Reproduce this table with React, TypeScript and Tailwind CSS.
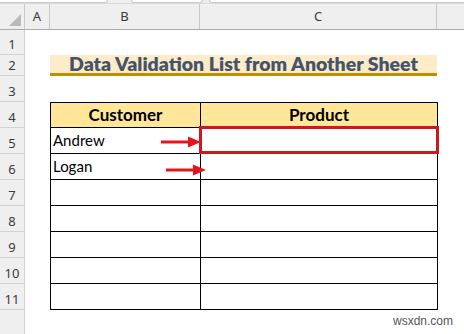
import React from "react";

const HEAD = "font-['Noto_Sans',sans-serif] text-[13px] text-[#3a3a3a]";

function RowHead({ n }: { n?: number }) {
  return (
    <div className={`w-[25px] shrink-0 bg-[#efefef] border-r border-b border-[#d2d2d2] flex items-end justify-center pb-[2px] leading-[16px] ${HEAD}`}>
      {n}
    </div>
  );
}

function Arrow({ className }: { className: string }) {
  return (
    <svg className={`absolute z-10 ${className}`} width="40" height="12" viewBox="0 0 40 12">
      <path d="M0 6 H30" stroke="#e0161d" strokeWidth="3" />
      <path d="M27 0.5 L40 6 L27 11.5 Z" fill="#e0161d" />
    </svg>
  );
}

export default function App() {
  const body = "font-['Lato',sans-serif] text-black";
  const tableRows = [7, 8, 9, 10, 11];

  return (
    <div className="relative w-[464px] h-[334px] bg-white overflow-hidden flex flex-col">
      {/* formula bar bottom edges */}
      <div className="h-[4px] shrink-0 bg-[#efefef] flex border-b border-[#dadada]">
        <div className="w-[108px] h-[3px] bg-white border-b border-r border-[#c8c8c8] rounded-br-[5px]" />
        <div className="w-[72px] ml-[23px] h-[3px] bg-white border-b border-x border-[#c8c8c8] rounded-b-[5px]" />
        <div className="flex-1 ml-[6px] h-[3px] bg-white border-b border-l border-[#c8c8c8] rounded-bl-[5px]" />
      </div>

      {/* column headers */}
      <div className={`h-[26px] shrink-0 flex bg-[#efefef] border-b border-[#ababab] ${HEAD}`}>
        <div className="w-[25px] border-r border-[#c8c8c8] flex items-end justify-end pr-[3px] pb-[3px]">
          <svg width="12" height="12" viewBox="0 0 12 12">
            <path d="M12 0 V12 H0 Z" fill="#b9b9b9" />
          </svg>
        </div>
        <div className="w-[25px] border-r border-[#c8c8c8] flex items-center justify-center">A</div>
        <div className="w-[150px] border-r border-[#c8c8c8] flex items-center justify-center">B</div>
        <div className="w-[237px] border-r border-[#c8c8c8] flex items-center justify-center">C</div>
        <div className="flex-1" />
      </div>

      {/* row 1 */}
      <div className="h-[25px] shrink-0 flex">
        <RowHead n={1} />
      </div>

      {/* row 2 title */}
      <div className="h-[21px] shrink-0 flex">
        <RowHead n={2} />
        <div className="w-[25px]" />
        <div className="w-[387px] bg-[#fdebc9] border-b-[3px] border-[#bf8f00] flex items-center justify-center pb-[1px] font-['Lato',sans-serif] font-extrabold text-[19.5px] leading-none text-[#44546a]">
          Data Validation List from Another Sheet
        </div>
      </div>

      {/* row 3 */}
      <div className="h-[26px] shrink-0 flex">
        <RowHead n={3} />
      </div>

      {/* row 4 header */}
      <div className={`h-[26px] shrink-0 flex ${body}`}>
        <RowHead n={4} />
        <div className="w-[25px]" />
        <div className="w-[151px] bg-[#ffe699] border border-black flex items-center justify-center font-bold text-[17px]">
          Customer
        </div>
        <div className="w-[237px] bg-[#ffe699] border-y border-r border-black flex items-center justify-center font-bold text-[17px]">
          Product
        </div>
      </div>

      {/* row 5 */}
      <div className={`h-[26px] shrink-0 flex ${body}`}>
        <RowHead n={5} />
        <div className="w-[25px]" />
        <div className="relative w-[151px] border-x border-b border-black flex items-center pl-[2px] text-[15px]">
          Andrew
          <Arrow className="left-[110px] top-[8px]" />
        </div>
        <div className="relative w-[237px] border-r border-b border-black">
          <div className="absolute -top-[2px] -left-[2px] -right-[2px] -bottom-[1px] border-[3px] border-[#d1171e]" />
        </div>
      </div>

      {/* row 6 */}
      <div className={`h-[26px] shrink-0 flex ${body}`}>
        <RowHead n={6} />
        <div className="w-[25px]" />
        <div className="relative w-[151px] border-x border-b border-black flex items-center pl-[2px] text-[15px]">
          Logan
          <Arrow className="left-[115px] top-[10px]" />
        </div>
        <div className="w-[237px] border-r border-b border-black" />
      </div>

      {tableRows.map((n) => (
        <div key={n} className="h-[26px] shrink-0 flex">
          <RowHead n={n} />
          <div className="w-[25px]" />
          <div className="w-[151px] border-x border-b border-black" />
          <div className="w-[237px] border-r border-b border-black" />
        </div>
      ))}

      <div className="flex-1 flex">
        <div className="w-[25px] bg-[#efefef] border-r border-[#d2d2d2]" />
      </div>

      <div className="absolute right-[11px] bottom-[4px] font-['Liberation_Sans',sans-serif] text-[12px] text-[#555]">
        wsxdn.com
      </div>
    </div>
  );
}
